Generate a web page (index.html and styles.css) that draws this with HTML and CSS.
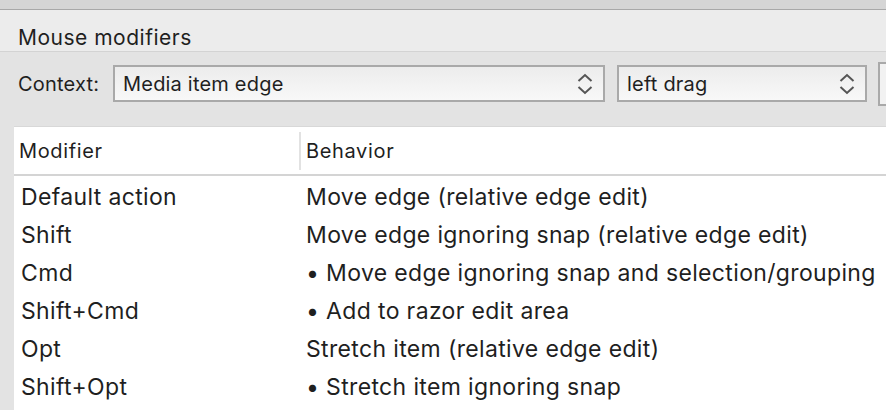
FILE: index.html
```html
<!DOCTYPE html>
<html lang="en">
<head>
<meta charset="UTF-8" />
<meta name="viewport" content="width=device-width, initial-scale=1" />
<title>Mouse modifiers</title>
<link rel="stylesheet" href="styles.css">
</head>
<body>

<div class="topbar"></div>

<div class="section-title">Mouse modifiers</div>

<div class="context-row">
  <span class="context-label">Context:</span>
  <div class="select select-wide">
    <span>Media item edge</span>
    <svg class="chevrons" width="16" height="22" viewBox="0 0 16 22">
      <path d="M1.5 8 L8 2 L14.5 8" />
      <path d="M1.5 14 L8 20 L14.5 14" />
    </svg>
  </div>
  <div class="select select-action">
    <span>left drag</span>
    <svg class="chevrons" width="16" height="22" viewBox="0 0 16 22">
      <path d="M1.5 8 L8 2 L14.5 8" />
      <path d="M1.5 14 L8 20 L14.5 14" />
    </svg>
  </div>
  <div class="select-stub"></div>
</div>

<div class="table">
  <div class="table-head">
    <div class="col-modifier">Modifier</div>
    <div class="col-behavior">Behavior</div>
  </div>
  <div class="row"><div class="col-modifier">Default action</div><div class="col-behavior">Move edge (relative edge edit)</div></div>
  <div class="row"><div class="col-modifier">Shift</div><div class="col-behavior">Move edge ignoring snap (relative edge edit)</div></div>
  <div class="row"><div class="col-modifier">Cmd</div><div class="col-behavior">• Move edge ignoring snap and selection/grouping</div></div>
  <div class="row"><div class="col-modifier">Shift+Cmd</div><div class="col-behavior">• Add to razor edit area</div></div>
  <div class="row"><div class="col-modifier">Opt</div><div class="col-behavior">Stretch item (relative edge edit)</div></div>
  <div class="row"><div class="col-modifier">Shift+Opt</div><div class="col-behavior">• Stretch item ignoring snap</div></div>
</div>

</body>
</html>
```

FILE: styles.css
```css
body {
  margin: 0;
  width: 886px;
  height: 410px;
  overflow: hidden;
  background: #e3e3e3;
  font-family: Inter, 'Noto Sans', sans-serif;
  color: #1f1f1f;
}
.topbar {
  height: 9px;
  background: #d5d5d5;
  border-bottom: 1px solid #a8a8a8;
}
.section-title {
  height: 42px;
  box-sizing: border-box;
  padding: 15px 0 0 18px;
  background: #ececec;
  border-bottom: 1px solid #d3d3d3;
  font-size: 21px;
  letter-spacing: 0.5px;
}
.context-row {
  display: flex;
  align-items: flex-start;
  height: 74px;
  box-sizing: border-box;
  padding: 13px 0 0 18px;
  white-space: nowrap;
  overflow: hidden;
}
.context-label {
  flex-shrink: 0;
  width: 95px;
  line-height: 38px;
  font-size: 20px;
  letter-spacing: 0.2px;
}
.select {
  flex-shrink: 0;
  display: flex;
  align-items: center;
  justify-content: space-between;
  height: 37px;
  box-sizing: border-box;
  border: 2px solid #a9a9a9;
  background: linear-gradient(#ececec, #f8f8f8);
  padding: 1px 10px 0 8px;
  font-size: 20px;
  letter-spacing: 0.2px;
}
.select-wide {
  width: 492px;
  margin-right: 12px;
}
.select-action {
  width: 250px;
  margin-right: 11px;
}
.chevrons {
  fill: none;
  stroke: #555;
  stroke-width: 2;
}
.select-stub {
  flex-shrink: 0;
  width: 20px;
  height: 44px;
  box-sizing: border-box;
  border: 2px solid #a9a9a9;
  border-right: none;
  background: #f2f2f2;
  margin-top: -3px;
}
.table {
  margin-left: 14px;
  height: 300px;
  background: #fff;
  border-top: 1px solid #d8d8d8;
  font-size: 23px;
  letter-spacing: 0.35px;
}
.table-head {
  display: flex;
  align-items: center;
  height: 47px;
  margin-bottom: 2px;
  border-bottom: 2px solid #d4d4d4;
  font-size: 20px;
  letter-spacing: 0.65px;
}
.table-head .col-modifier {
  padding-left: 5px;
  width: 280px;
}
.table-head .col-behavior {
  border-left: 2px solid #e2e2e2;
  padding: 7px 0 7px 5px;
}
.row {
  display: flex;
  align-items: center;
  height: 38px;
}
.row .col-modifier {
  padding-left: 7px;
  width: 285px;
}
.row .col-behavior {
  white-space: nowrap;
}
```
